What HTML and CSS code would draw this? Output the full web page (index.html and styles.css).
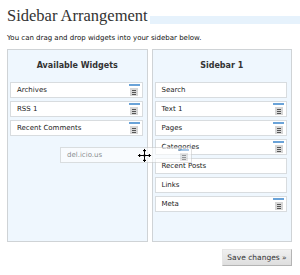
FILE: index.html
```html
<!DOCTYPE html>
<html>
<head>
<meta charset="utf-8">
<link rel="stylesheet" href="styles.css">
</head>
<body>
<div class="wrap">
  <h2 class="title"><span class="title-text">Sidebar Arrangement</span><span class="title-band"></span></h2>
  <p class="intro">You can drag and drop widgets into your sidebar below.</p>
  <div class="content">
    <div class="panels">
      <div class="panel">
        <h3 class="panel-title">Available Widgets</h3>
        <ul class="list">
          <li class="item"><span class="label">Archives</span><span class="handle"><i class="bar"></i><svg class="grip" width="8" height="8" viewBox="0 0 8 8"><rect width="8" height="8" fill="#d6d6d6"/><path d="M2 2.5h4M2 4.5h4M2 6.5h4" stroke="#555" stroke-width="1"/></svg></span></li>
          <li class="item"><span class="label">RSS 1</span><span class="handle"><i class="bar"></i><svg class="grip" width="8" height="8" viewBox="0 0 8 8"><rect width="8" height="8" fill="#d6d6d6"/><path d="M2 2.5h4M2 4.5h4M2 6.5h4" stroke="#555" stroke-width="1"/></svg></span></li>
          <li class="item"><span class="label">Recent Comments</span><span class="handle"><i class="bar"></i><svg class="grip" width="8" height="8" viewBox="0 0 8 8"><rect width="8" height="8" fill="#d6d6d6"/><path d="M2 2.5h4M2 4.5h4M2 6.5h4" stroke="#555" stroke-width="1"/></svg></span></li>
        </ul>
      </div>
      <div class="panel">
        <h3 class="panel-title">Sidebar 1</h3>
        <ul class="list">
          <li class="item"><span class="label">Search</span></li>
          <li class="item"><span class="label">Text 1</span><span class="handle"><i class="bar"></i><svg class="grip" width="8" height="8" viewBox="0 0 8 8"><rect width="8" height="8" fill="#d6d6d6"/><path d="M2 2.5h4M2 4.5h4M2 6.5h4" stroke="#555" stroke-width="1"/></svg></span></li>
          <li class="item"><span class="label">Pages</span><span class="handle"><i class="bar"></i><svg class="grip" width="8" height="8" viewBox="0 0 8 8"><rect width="8" height="8" fill="#d6d6d6"/><path d="M2 2.5h4M2 4.5h4M2 6.5h4" stroke="#555" stroke-width="1"/></svg></span></li>
          <li class="item"><span class="label">Categories</span><span class="handle"><i class="bar"></i><svg class="grip" width="8" height="8" viewBox="0 0 8 8"><rect width="8" height="8" fill="#d6d6d6"/><path d="M2 2.5h4M2 4.5h4M2 6.5h4" stroke="#555" stroke-width="1"/></svg></span></li>
          <li class="item"><span class="label">Recent Posts</span></li>
          <li class="item"><span class="label">Links</span></li>
          <li class="item"><span class="label">Meta</span><span class="handle"><i class="bar"></i><svg class="grip" width="8" height="8" viewBox="0 0 8 8"><rect width="8" height="8" fill="#d6d6d6"/><path d="M2 2.5h4M2 4.5h4M2 6.5h4" stroke="#555" stroke-width="1"/></svg></span></li>
        </ul>
      </div>
    </div>
    <div class="actions"><button class="save">Save changes »</button></div>
  </div>
  <div class="item ghost"><span class="label">del.icio.us</span><span class="handle"><i class="bar"></i><svg class="grip" width="8" height="8" viewBox="0 0 8 8"><rect width="8" height="8" fill="#d6d6d6"/><path d="M2 2.5h4M2 4.5h4M2 6.5h4" stroke="#555" stroke-width="1"/></svg></span></div>
  <svg class="cursor" width="15" height="15" viewBox="0 0 15 15"><path d="M7.5 0.5 L10.5 3.5 L8.5 3.5 L8.5 6.5 L11.5 6.5 L11.5 4.5 L14.5 7.5 L11.5 10.5 L11.5 8.5 L8.5 8.5 L8.5 11.5 L10.5 11.5 L7.5 14.5 L4.5 11.5 L6.5 11.5 L6.5 8.5 L3.5 8.5 L3.5 10.5 L0.5 7.5 L3.5 4.5 L3.5 6.5 L6.5 6.5 L6.5 3.5 L4.5 3.5 Z" fill="#000" stroke="#fff" stroke-width="1"/></svg>
</div>
</body>
</html>
```

FILE: styles.css
```css
html, body {
  margin: 0;
  padding: 0;
  background: #fff;
}
body {
  font-family: "DejaVu Sans", Verdana, sans-serif;
  color: #222;
}
.wrap {
  position: relative;
  padding-left: 7px;
}
.title {
  display: flex;
  align-items: flex-end;
  height: 24px;
  margin: 0;
  font-weight: normal;
}
.title-text {
  font: 16.5px/17px "Liberation Serif", "Times New Roman", serif;
  color: #333;
  padding-right: 2px;
}
.title-band {
  flex: 1;
  height: 8px;
  background: #e6f2fc;
}
.intro {
  margin: 9px 0 0;
  font-size: 7px;
  line-height: 10px;
  color: #111;
}
.content {
  width: 285px;
  margin-top: 6px;
}
.panels {
  display: flex;
  gap: 4px;
}
.panel {
  width: 141px;
  height: 193px;
  box-sizing: border-box;
  border: 1px solid #cfd3d6;
  background: #eff7fe;
  padding: 0 4px 0 2px;
}
.panel-title {
  margin: 0;
  padding: 11px 0 11px 2px;
  font-size: 8px;
  line-height: 10px;
  font-weight: bold;
  text-align: center;
  color: #333;
}
.list {
  list-style: none;
  margin: 0;
  padding: 0;
  display: flex;
  flex-direction: column;
  gap: 3px;
}
.item {
  display: flex;
  align-items: stretch;
  height: 16px;
  box-sizing: border-box;
  border: 1px solid #d8dcdf;
  background: #fff;
  padding: 0 2px 0 6px;
}
.label {
  font-size: 7px;
  line-height: 14px;
  color: #1a1a1a;
}
.handle {
  margin-left: auto;
  width: 11px;
  display: flex;
  flex-direction: column;
  align-items: center;
  padding-top: 1px;
  gap: 2px;
}
.bar {
  display: block;
  width: 11px;
  height: 2px;
  background: #6aa3d8;
}
.grip {
  display: block;
}
.actions {
  display: flex;
  justify-content: flex-end;
  margin-top: 7px;
}
.save {
  height: 17px;
  width: 70px;
  padding: 0;
  font-family: "DejaVu Sans", Verdana, sans-serif;
  font-size: 7.5px;
  color: #333;
  background: linear-gradient(#f0f0f0, #dedede);
  border: 1px solid;
  border-color: #e6e6e6 #b4b4b4 #b4b4b4 #e6e6e6;
  border-radius: 0;
}
.ghost {
  position: absolute;
  left: 60px;
  top: 147px;
  width: 132px;
  opacity: 0.6;
  border-color: #ccc;
}
.ghost .label {
  color: #444;
}
.cursor {
  position: absolute;
  left: 137px;
  top: 148px;
}
```
